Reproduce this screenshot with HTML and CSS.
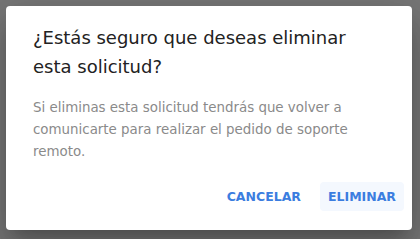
FILE: index.html
```html
<!DOCTYPE html>
<html lang="es">
<head>
<meta charset="utf-8">
<title>Eliminar solicitud</title>
<link rel="stylesheet" href="styles.css">
</head>
<body>
<div class="backdrop">
  <div class="dialog" role="dialog">
    <h2 class="dialog-title">¿Estás seguro que deseas eliminar esta solicitud?</h2>
    <p class="dialog-text">Si eliminas esta solicitud tendrás que volver a comunicarte para realizar el pedido de soporte remoto.</p>
    <div class="dialog-actions">
      <button class="btn">CANCELAR</button>
      <button class="btn btn-active">ELIMINAR</button>
    </div>
  </div>
</div>
</body>
</html>
```

FILE: styles.css
```css
html, body {
  margin: 0;
  padding: 0;
}
body {
  width: 420px;
  height: 239px;
  overflow: hidden;
  background: #777777;
  font-family: "DejaVu Sans", "Liberation Sans", sans-serif;
}
.backdrop {
  padding: 6px 8px 9px 6px;
  box-sizing: border-box;
  height: 239px;
}
.dialog {
  width: 406px;
  height: 224px;
  box-sizing: border-box;
  background: #ffffff;
  border-radius: 4px;
  box-shadow: 0 11px 15px -7px rgba(0,0,0,0.2), 0 24px 38px 3px rgba(0,0,0,0.14), 0 9px 46px 8px rgba(0,0,0,0.12);
  display: flex;
  flex-direction: column;
  padding: 17px 8px 19px 27px;
}
.dialog-title {
  margin: 0;
  font-size: 18px;
  font-weight: 400;
  line-height: 29px;
  color: #222222;
  padding-right: 20px;
}
.dialog-text {
  margin: 16px 0 0 0;
  font-size: 13.4px;
  line-height: 22px;
  color: #8a8a8a;
  padding-right: 30px;
}
.dialog-actions {
  margin-top: auto;
  display: flex;
  justify-content: flex-end;
  gap: 11px;
}
.btn {
  font-family: inherit;
  border: 0;
  background: transparent;
  color: #3b7de0;
  font-size: 12.5px;
  font-weight: 700;
  height: 29px;
  padding: 0 8px;
  border-radius: 4px;
  cursor: pointer;
}
.btn-active {
  background: #f4f8fe;
}
```
